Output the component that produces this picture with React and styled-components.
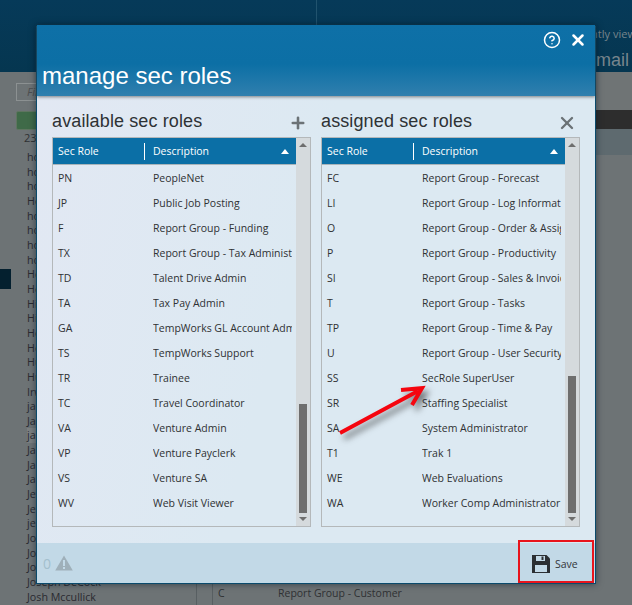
import React from 'react';
import styled, { createGlobalStyle } from 'styled-components';
import { CircleHelp, X, Plus } from 'lucide-react';

const GlobalStyle = createGlobalStyle`
  html, body {
    margin: 0;
    padding: 0;
    background: #6d7375;
  }
`;

const Page = styled.div`
  position: relative;
  width: 632px;
  height: 605px;
  overflow: hidden;
  background: #6d7375;
  font-family: "Open Sans", "Noto Sans", sans-serif;
  color: #2f3133;
`;

const TopBar = styled.div`
  display: flex;
  height: 72px;
  background: linear-gradient(#063a59, #053650);
`;

const TopLeft = styled.div`
  width: 316px;
  border-right: 1px solid #21536e;
`;

const TopRight = styled.div`
  flex: 1;
  padding: 27px 0 0 252px;
  white-space: nowrap;
  color: #77858c;
  overflow: hidden;
`;

const RecentLabel = styled.div`
  font-size: 11px;
  line-height: 14px;
`;

const RecentName = styled.div`
  font-family: "Liberation Sans", sans-serif;
  font-size: 18px;
  line-height: 22px;
  margin-top: 8px;
  margin-left: 17px;
`;

const Lower = styled.div`
  display: flex;
  height: 533px;
`;

const Sidebar = styled.div`
  position: relative;
  width: 196px;
  padding: 11px 0 0 16px;
  box-sizing: border-box;
`;

const Filter = styled.div`
  width: 60px;
  height: 18px;
  border: 1px solid #8c9192;
  box-sizing: border-box;
  padding-left: 10px;
  font-size: 11px;
  font-style: italic;
  line-height: 16px;
  color: #4d4f50;
`;

const GreenButton = styled.div`
  width: 60px;
  height: 19px;
  margin-top: 10px;
  background: #3f6a48;
  border: 1px solid #5f7560;
  box-sizing: border-box;
  border-radius: 2px;
`;

const Count = styled.div`
  margin: 0 0 0 8px;
  font-size: 11px;
  line-height: 16px;
`;

const NameList = styled.div`
  margin: 4px 0 0 11px;
`;

const Name = styled.div`
  height: 14.66px;
  font-size: 10.7px;
  line-height: 14.66px;
  white-space: nowrap;
  color: #2a2a30;
  background: ${p => (p.$active ? '#7b7f80' : 'transparent')};
`;

const NavChip = styled.div`
  position: absolute;
  left: 0;
  top: 197px;
  width: 11px;
  height: 20px;
  background: #04202f;
`;

const Main = styled.div`
  flex: 1;
  display: flex;
  flex-direction: column;
  border-left: 1px solid #585f62;
`;

const Band = styled.div`
  height: ${p => p.$h}px;
  background: ${p => p.$bg};
`;

const MainRow = styled.div`
  flex: 1;
  display: flex;
  align-items: flex-end;
  margin-left: 15px;
  padding-left: 5px;
  border-left: 1px solid #585f62;
  font-size: 10.5px;
  line-height: 24px;
`;

const MainCode = styled.div`
  width: 60px;
`;

const Modal = styled.div`
  position: absolute;
  left: 36px;
  top: 25px;
  width: 560px;
  height: 559px;
  box-sizing: border-box;
  display: flex;
  flex-direction: column;
  border: 1px solid #0a4a6c;
  border-top: 0;
  border-radius: 3px 3px 0 0;
  background: #dce9f2;
  box-shadow: 0 0 7px rgba(0, 20, 35, 0.55);
`;

const ModalHeader = styled.div`
  position: relative;
  height: 71px;
  flex-shrink: 0;
  background: linear-gradient(#0e70a7 0%, #0c6fa5 55%, #307fae 100%);
  box-shadow: 0 1px 3px rgba(60, 60, 60, 0.6);
  color: #fff;
`;

const HeaderIcons = styled.div`
  display: flex;
  align-items: center;
  justify-content: flex-end;
  gap: 8px;
  height: 30px;
  padding-right: 8px;
`;

const ModalTitle = styled.div`
  padding-left: 5px;
  font-family: "Liberation Sans", sans-serif;
  font-size: 24px;
  line-height: 28px;
  margin-top: 7px;
`;

const ModalBody = styled.div`
  flex: 1;
  display: flex;
  gap: 10px;
  padding-left: 15px;
  background: linear-gradient(105deg, #e2e8f3 0%, #dce9f2 45%);
`;

const Panel = styled.div`
  width: 259px;
`;

const PanelHead = styled.div`
  display: flex;
  align-items: flex-end;
  justify-content: space-between;
  height: 41px;
  padding-right: 2px;
  color: #6b7276;
`;

const PanelTitle = styled.div`
  font-family: "Liberation Sans", sans-serif;
  font-size: 18px;
  line-height: 20px;
  padding-bottom: 6px;
  color: #2e3235;
  letter-spacing: 0.12px;
`;

const Grid = styled.div`
  display: flex;
  height: 390px;
  box-sizing: border-box;
  border: 1px solid #b4b8ba;
`;

const GridMain = styled.div`
  width: 243px;
  overflow: hidden;
`;

const GridHeader = styled.div`
  position: relative;
  display: flex;
  align-items: center;
  height: 26px;
  background: #0b6fa6;
  border-bottom: 1px solid #a9b4ba;
  color: #fff;
  font-size: 10.5px;
`;

const HeadCell = styled.div`
  padding-left: ${p => (p.$first ? '5px' : '8px')};
  width: ${p => (p.$first ? '86px' : 'auto')};
  height: 17px;
  line-height: 16px;
  box-sizing: content-box;
  border-right: ${p => (p.$first ? '1px solid #fff' : '0')};
`;

const SortArrow = styled.div`
  position: absolute;
  right: 7px;
  top: 11px;
  width: 0;
  height: 0;
  border-left: 4.5px solid transparent;
  border-right: 4.5px solid transparent;
  border-bottom: 5px solid #fff;
`;

const Row = styled.div`
  display: flex;
  height: 25px;
  align-items: center;
  white-space: nowrap;
  font-size: 10.5px;
`;

const CodeCell = styled.div`
  width: 100px;
  padding-left: 5px;
  box-sizing: border-box;
  flex-shrink: 0;
`;

const DescCell = styled.div`
  overflow: hidden;
  flex: 1;
  margin-right: 4px;
`;

const ScrollTrack = styled.div`
  position: relative;
  flex: 1;
  background: #d5dadd;
`;

const ScrollUp = styled.div`
  position: absolute;
  left: 3px;
  top: 5px;
  border-left: 4px solid transparent;
  border-right: 4px solid transparent;
  border-bottom: 4px solid #6e6e6e;
`;

const ScrollDown = styled.div`
  position: absolute;
  left: 3px;
  bottom: 5px;
  border-left: 4px solid transparent;
  border-right: 4px solid transparent;
  border-top: 4px solid #6e6e6e;
`;

const ScrollThumb = styled.div`
  position: absolute;
  left: 3px;
  width: 8px;
  bottom: 13px;
  height: ${p => p.$h}px;
  background: #6e6e6e;
`;

const ModalFooter = styled.div`
  display: flex;
  align-items: center;
  justify-content: space-between;
  height: 40px;
  flex-shrink: 0;
  padding-left: 6px;
  background: #c2d9e7;
`;

const Warnings = styled.div`
  display: flex;
  align-items: center;
  gap: 4px;
  font-size: 14px;
  color: #a3bfcd;
`;

const SaveButton = styled.div`
  display: flex;
  align-items: center;
  gap: 5px;
  align-self: flex-end;
  width: 76px;
  height: 43px;
  box-sizing: border-box;
  margin-right: 1px;
  padding: 4px 0 0 12px;
  border: 2px solid #e8141c;
  font-size: 10.5px;
  color: #33363a;
`;

const ArrowMark = styled.svg`
  position: absolute;
  left: 330px;
  top: 380px;
  filter: drop-shadow(4px 5px 3px rgba(40, 40, 40, 0.6));
`;

const names = [
  'hodges', 'hoffman', 'holmes', 'Henry', 'hooper', 'horton', 'hoyt', 'howard',
  'Hernandez', 'Herrera', 'Hicks', 'Hill', 'Holt', 'Howell', 'Hughes', 'Hunt', 'Irwin',
  'jackson', 'Jacobs', 'jacques', 'James', 'Jansen', 'Jarvis', 'Jeffers', 'Jenkins',
  'jensen', 'Johnson', 'Jones', 'Jordan', 'Joseph DeCock', 'Josh Mccullick',
];

const available = [
  ['PN', 'PeopleNet'],
  ['JP', 'Public Job Posting'],
  ['F', 'Report Group - Funding'],
  ['TX', 'Report Group - Tax Administration'],
  ['TD', 'Talent Drive Admin'],
  ['TA', 'Tax Pay Admin'],
  ['GA', 'TempWorks GL Account Admin'],
  ['TS', 'TempWorks Support'],
  ['TR', 'Trainee'],
  ['TC', 'Travel Coordinator'],
  ['VA', 'Venture Admin'],
  ['VP', 'Venture Payclerk'],
  ['VS', 'Venture SA'],
  ['WV', 'Web Visit Viewer'],
];

const assigned = [
  ['FC', 'Report Group - Forecast'],
  ['LI', 'Report Group - Log Information'],
  ['O', 'Report Group - Order & Assignment'],
  ['P', 'Report Group - Productivity'],
  ['SI', 'Report Group - Sales & Invoicing'],
  ['T', 'Report Group - Tasks'],
  ['TP', 'Report Group - Time & Pay'],
  ['U', 'Report Group - User Security'],
  ['SS', 'SecRole SuperUser'],
  ['SR', 'Staffing Specialist'],
  ['SA', 'System Administrator'],
  ['T1', 'Trak 1'],
  ['WE', 'Web Evaluations'],
  ['WA', 'Worker Comp Administrator'],
];

const RoleGrid = ({ rows, thumb }) => (
  <Grid>
    <GridMain>
      <GridHeader>
        <HeadCell $first>Sec Role</HeadCell>
        <HeadCell>Description</HeadCell>
        <SortArrow />
      </GridHeader>
      {rows.map(([code, desc]) => (
        <Row key={code}>
          <CodeCell>{code}</CodeCell>
          <DescCell>{desc}</DescCell>
        </Row>
      ))}
    </GridMain>
    <ScrollTrack>
      <ScrollUp />
      <ScrollThumb $h={thumb} />
      <ScrollDown />
    </ScrollTrack>
  </Grid>
);

const App = () => (
  <Page>
    <GlobalStyle />
    <TopBar>
      <TopLeft />
      <TopRight>
        <RecentLabel>recently viewed</RecentLabel>
        <RecentName>email</RecentName>
      </TopRight>
    </TopBar>
    <Lower>
      <Sidebar>
        <Filter>Filter</Filter>
        <GreenButton />
        <Count>23</Count>
        <NameList>
          {names.map((name, i) => (
            <Name key={name} $active={i === 19}>{name}</Name>
          ))}
        </NameList>
        <NavChip />
      </Sidebar>
      <Main>
        <Band $h={38} $bg="#6f7475" />
        <Band $h={19} $bg="#2d2d2d" />
        <Band $h={26} $bg="#5e6a6f" />
        <MainRow>
          <MainCode>C</MainCode>
          <div>Report Group - Customer</div>
        </MainRow>
      </Main>
    </Lower>

    <Modal>
      <ModalHeader>
        <HeaderIcons>
          <CircleHelp size={18} strokeWidth={2} />
          <X size={18} strokeWidth={3.4} />
        </HeaderIcons>
        <ModalTitle>manage sec roles</ModalTitle>
      </ModalHeader>
      <ModalBody>
        <Panel>
          <PanelHead>
            <PanelTitle>available sec roles</PanelTitle>
            <Plus size={18} strokeWidth={3.4} style={{ marginRight: 2, marginBottom: 5 }} />
          </PanelHead>
          <RoleGrid rows={available} thumb={109} />
        </Panel>
        <Panel>
          <PanelHead>
            <PanelTitle>assigned sec roles</PanelTitle>
            <X size={20} strokeWidth={2.8} style={{ marginRight: 1, marginBottom: 4 }} />
          </PanelHead>
          <RoleGrid rows={assigned} thumb={137} />
        </Panel>
      </ModalBody>
      <ModalFooter>
        <Warnings>
          0
          <svg width="18" height="16" viewBox="0 0 18 16">
            <path d="M9 0.5 L17.8 15.5 H0.2 Z" fill="#9fb0ba" />
            <rect x="8" y="5" width="2" height="6" fill="#c2d9e7" />
            <rect x="8" y="12" width="2" height="2" fill="#c2d9e7" />
          </svg>
        </Warnings>
        <SaveButton>
          <svg width="18" height="18" viewBox="0 0 18 18">
            <path d="M0 0 H14.5 L18 3.5 V18 H0 Z" fill="#2b2f33" />
            <rect x="4" y="1" width="9" height="5" fill="#c2d9e7" />
            <rect x="9.5" y="1.5" width="2" height="3.5" fill="#2b2f33" />
            <rect x="3" y="10" width="12" height="7" fill="#c2d9e7" />
          </svg>
          Save
        </SaveButton>
      </ModalFooter>
    </Modal>

    <ArrowMark width="100" height="60" viewBox="0 0 100 60">
      <path
        d="M10 53 L88 11 M71 10 L92 8 L82 25"
        fill="none"
        stroke="#f5050f"
        strokeWidth="4"
      />
    </ArrowMark>
  </Page>
);

export default App;
